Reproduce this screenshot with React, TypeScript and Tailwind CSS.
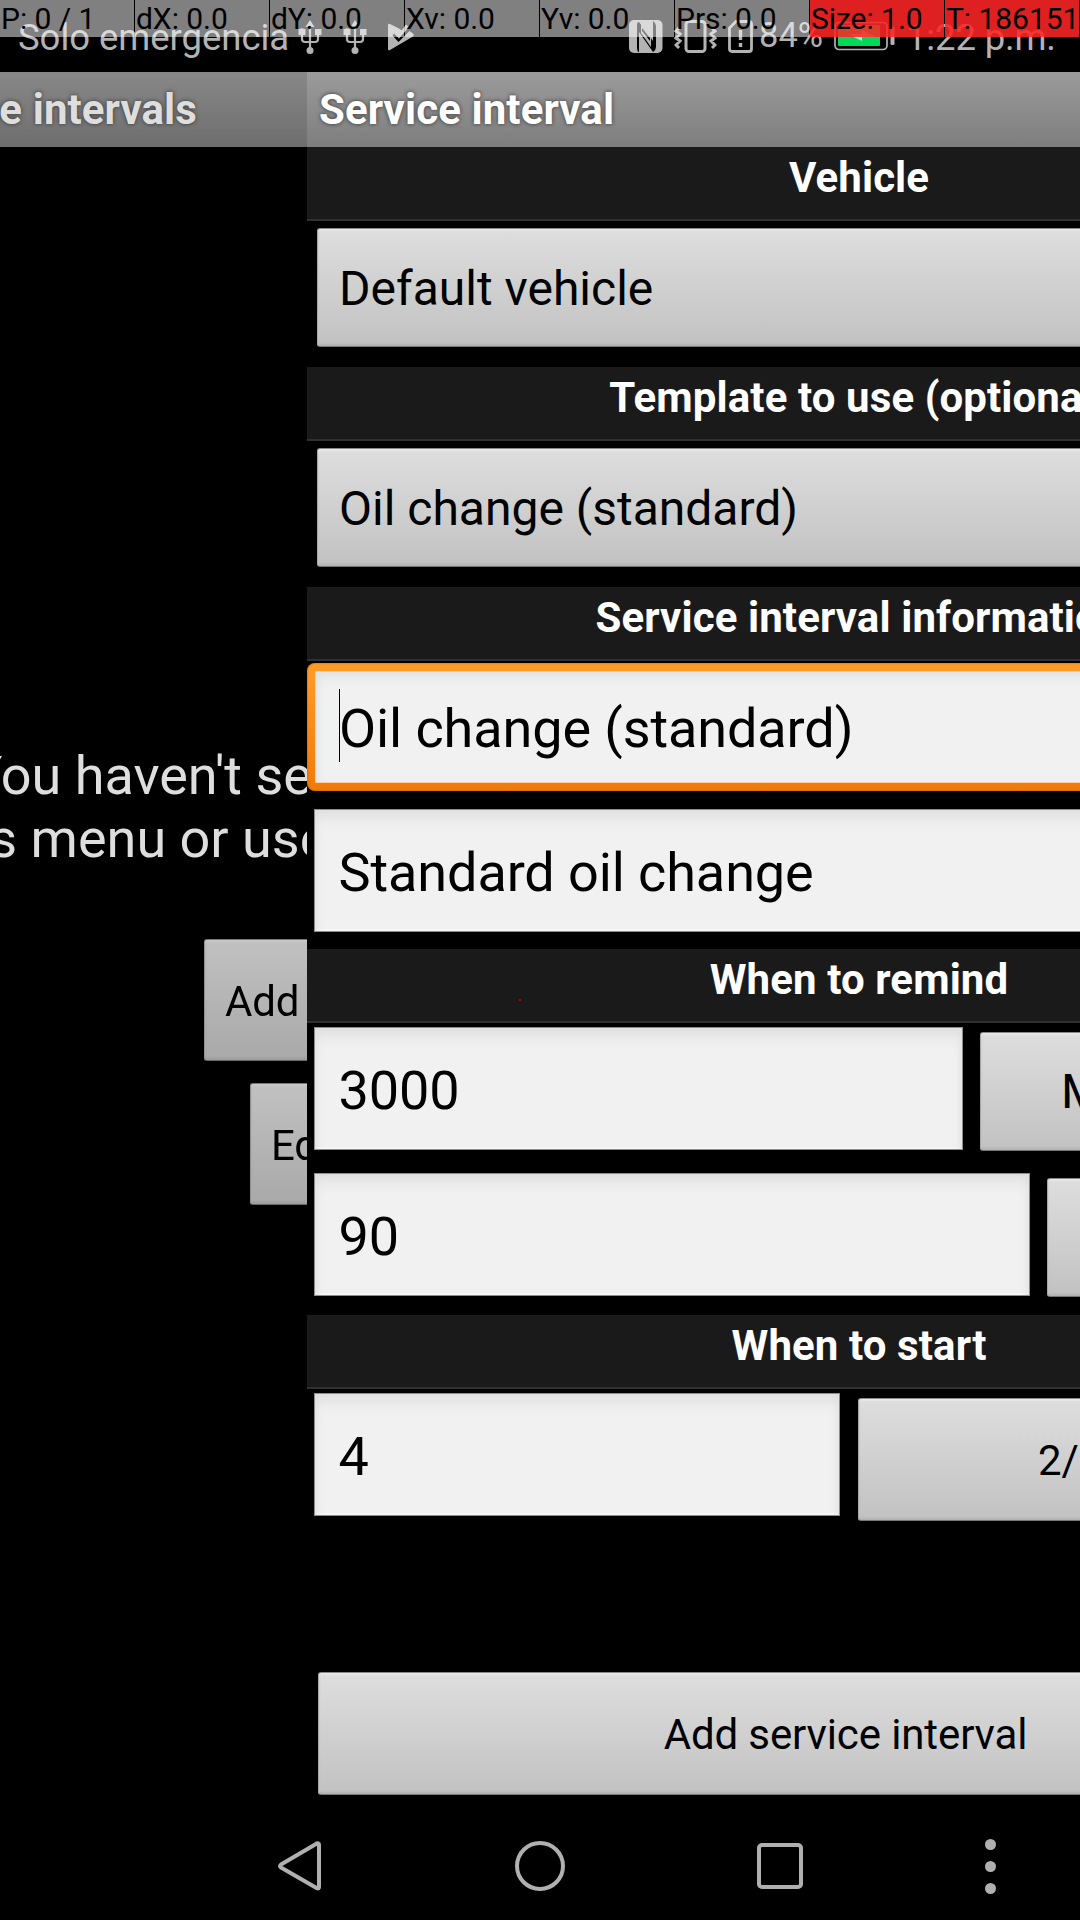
import type { ReactNode } from 'react';

function SectionHeader({ children }: { children: ReactNode }) {
  return (
    <h2 className="h-[74px] shrink-0 border-b-2 border-[#303030] bg-[#1a1a1a] pl-6 text-center text-[42px] leading-[62px] font-bold tracking-[0.1px] text-white">
      {children}
    </h2>
  );
}

const button =
  'shrink-0 rounded-[3px] border border-t-[#8a8a8a] border-r-[#a8a8a8] border-b-[#777] border-l-[#a8a8a8] bg-linear-to-b from-[#dedede] to-[#c2c2c2] tracking-[-0.120px] text-black shadow-[inset_0_2px_1px_#e6e6e6,inset_0_-2px_2px_#b4b4b4]';

const field =
  'h-[123px] shrink-0 border border-[#8d8d8d] bg-[#f1f1f1] pl-[23.500px] text-[54px] leading-[125px] tracking-[-0.1px] text-black shadow-[inset_0_14px_16px_-8px_#dcdcdc,inset_6px_0_10px_-6px_#dedede,inset_-6px_0_10px_-6px_#dedede,inset_0_-2px_1px_#fafafa]';

function Spinner({ children }: { children: ReactNode }) {
  return (
    <div className="ml-[10px] h-[119px] w-[1060px] shrink-0 rounded-[3px] border border-t-[#8a8a8a] border-r-[#a8a8a8] border-b-[#777] border-l-[#a8a8a8] bg-linear-to-b from-[#dedede] to-[#c2c2c2] pl-[21px] text-[48px] leading-[119px] text-black shadow-[inset_0_2px_1px_#e6e6e6,inset_0_-2px_2px_#b4b4b4]">
      {children}
    </div>
  );
}

function Usb() {
  return (
    <svg className="h-[34px] w-6" viewBox="0 0 24 34" fill="#b3b3b3">
      <path d="M12 0l4.500 7h-9z" />
      <circle cx="12" cy="30.500" r="3.500" />
      <circle cx="4" cy="11" r="2.800" />
      <rect x="17" y="9" width="6.500" height="6" />
      <path d="M0.500 9h7v6h-7z" />
      <path d="M4 12v7q0 3 3 3h10q3 0 3-3v-7M12 4v26" fill="none" stroke="#b3b3b3" strokeWidth="2.200" />
    </svg>
  );
}

function StatusBar() {
  return (
    <div className="flex h-[72px] shrink-0 items-start bg-black text-[#b3b3b3]">
      <span className="ml-[18px] w-[280px] text-[36.500px] leading-[75px] tracking-[-0.050px] whitespace-nowrap">Solo emergencia</span>
      <div className="mt-[19.500px] flex h-[34px] items-center">
        <Usb />
        <div className="w-[21px]" />
        <Usb />
        <svg className="ml-[21px] h-7 w-[26px]" viewBox="0 0 26 28" fill="#b3b3b3">
          <path d="M0 2Q0 0 2 1L11 5.500 14 7.500 10.500 13 7 9.500 4.500 12.500 10.500 19 21.500 8 25 10.500Q26.500 12 25 13.500L2 27Q0 28 0 26z" />
          <path d="M18 1.500L21 4 11 15.500 6 10.500 8 8 11 11z" />
        </svg>
      </div>
      <div className="mt-5 ml-[215px] flex h-[33px] items-center">
        <svg className="h-[33px] w-[34px]" viewBox="0 0 34 33">
          <rect width="33.500" height="33" rx="5" fill="#b3b3b3" />
          <path d="M10 2Q8 2 8 5v23q0 3 2 4.500V12l14 20q3-2 3-5V6q0-3-3-5v20z" fill="#000" />
          <path d="M12 4l10 13v10L12 13z" fill="#b3b3b3" />
          <path d="M13 8l8 10v3L13 11z" fill="#000" />
        </svg>
        <svg className="ml-[11px] h-[33px] w-[43px]" viewBox="0 0 43 33" fill="none" stroke="#b3b3b3">
          <rect x="12" y="1.500" width="19" height="30" rx="3" strokeWidth="3" />
          <path d="M5 8L2 11l4 3-4 4 4 3-4 4 3 3M38 8l3 3-4 3 4 4-4 3 4 4-3 3" strokeWidth="3" />
        </svg>
        <svg className="ml-[11px] h-[33px] w-[25px]" viewBox="0 0 25 33" fill="none" stroke="#b3b3b3">
          <path d="M8 1.500h13q2.500 0 2.500 2.500v25q0 2.500-2.500 2.500H4Q1.500 31.500 1.500 29V8z" strokeWidth="2.800" />
          <path d="M12.500 10v10M12.500 23v4" strokeWidth="3.400" />
        </svg>
      </div>
      <span className="ml-[6px] w-[75px] text-[34.500px] leading-[70px] whitespace-nowrap">84%</span>
      <svg className="mt-[21px] h-[30px] w-[61px]" viewBox="0 0 61 30">
        <rect x="1" y="1.500" width="52" height="27" rx="4" fill="none" stroke="#b3b3b3" strokeWidth="1.700" />
        <rect x="4" y="4" width="42" height="21" rx="1" fill="#00d95a" />
        <path d="M14 13l14 7v-4h14L28 9v4z" fill="#b3ecc7" />
        <rect x="56.500" y="6" width="4" height="18" rx="1.500" fill="#b3b3b3" />
      </svg>
      <span className="ml-[11px] text-[36.500px] leading-[75px] tracking-[-0.150px] whitespace-nowrap">1:22 p.m.</span>
    </div>
  );
}

const readings = ['P: 0 / 1', 'dX: 0.0', 'dY: 0.0', 'Xv: 0.0', 'Yv: 0.0', 'Prs: 0.0', 'Size: 1.0', 'T: 186151'];

function PointerReadout() {
  return (
    <div className="absolute inset-x-0 top-0 flex h-[37px] gap-px">
      {readings.map((text, i) => (
        <div key={text} className="w-[134px] shrink-0 bg-white/50">
          <div
            className={`h-[37px] pl-[1px] text-[30px] leading-[38px] tracking-[-0.050px] whitespace-nowrap text-black ${i > 5 ? 'bg-[#ff0000]/75' : ''}`}
          >
            {text}
          </div>
        </div>
      ))}
    </div>
  );
}

function PreviousScreen() {
  return (
    <section className="flex w-[307px] shrink-0 flex-col overflow-hidden bg-black">
      <div className="flex h-[75px] justify-end bg-linear-to-b from-[#888] to-[#6e6e6e] pr-[110px] text-[42px] leading-[75px] font-bold tracking-[0.1px] whitespace-nowrap text-[#dedede] [text-shadow:0_0_4px_#333]">
        Service intervals
      </div>
      <div className="mt-[597px] h-[195px] text-[54px] leading-[63px] whitespace-nowrap text-[#dedede]">
        <p className="-ml-[30px]">You haven't set</p>
        <p className="-ml-[18px]">'s menu or use</p>
      </div>
      <div className={`${button} ml-[204px] h-[122px] w-[500px] pl-5 text-[42px] leading-[123px] brightness-[.87]`}>Add service interval</div>
      <div className={`${button} mt-[22px] ml-[250px] h-[122px] w-[400px] pl-5 text-[42px] leading-[123px] brightness-[.87]`}>Edit templates</div>
    </section>
  );
}

function ServiceIntervalForm() {
  return (
    <section className="w-[773px] shrink-0 overflow-hidden bg-black">
      <div className="flex w-[1080px] flex-col">
        <h1 className="h-[75px] bg-linear-to-b from-[#9b9b9b] to-[#7e7e7e] pl-3 text-[42px] leading-[75px] font-bold tracking-[0.1px] text-white [text-shadow:0_0_4px_#333]">
          Service interval
        </h1>
        <SectionHeader>Vehicle</SectionHeader>
        <div className="pt-[7px] pb-5">
          <Spinner>Default vehicle</Spinner>
        </div>
        <SectionHeader>Template to use (optional)</SectionHeader>
        <div className="pt-[7px] pb-5">
          <Spinner>Oil change (standard)</Spinner>
        </div>
        <SectionHeader>Service interval information</SectionHeader>
        <div className="mt-[2px] h-[128px] rounded-[8px] bg-linear-to-b from-[#ff9c28] to-[#f27a05] p-2 shadow-[inset_0_0_2px_#a85500]">
          <div className="flex h-[112px] items-start border border-[#f8cfa0] bg-[#f1f1f1] pl-[23px] text-[54px] leading-[114px] tracking-[-0.1px] text-black shadow-[inset_0_10px_14px_-6px_#dde0e0,inset_6px_0_10px_-6px_#dedede]">
            <span className="mt-[17px] -mr-px h-[73px] w-px bg-black" />
            Oil change (standard)
          </div>
        </div>
        <div className={`${field} mx-[7px] mt-[18px] mb-[17px]`}>Standard oil change</div>
        <SectionHeader>When to remind</SectionHeader>
        <div className="mt-1 flex h-[146px] items-start pl-[7px]">
          <div className={`${field} w-[649px]`}>3000</div>
          <div className={`${button} mt-[5px] ml-[17px] h-[119px] w-[390px] pl-[80px] text-[48px] leading-[118px]`}>Miles</div>
        </div>
        <div className="flex h-[142px] items-start pl-[7px]">
          <div className={`${field} w-[716px]`}>90</div>
          <div className={`${button} mt-[5px] ml-[17px] h-[119px] w-[330px] pl-[80px] text-[48px] leading-[118px]`}>Days</div>
        </div>
        <SectionHeader>When to start</SectionHeader>
        <div className="mt-1 flex h-[279px] items-start pl-[7px]">
          <div className={`${field} w-[526px]`}>4</div>
          <div className={`${button} mt-[5px] ml-[18px] h-[123px] w-[512px] pl-[179px] text-[42px] leading-[123px]`}>2/10/17</div>
        </div>
        <div className={`${button} mx-[11px] h-[123px] pr-[3px] text-center text-[42px] leading-[123px]`}>Add service interval</div>
      </div>
    </section>
  );
}

function NavigationBar() {
  return (
    <nav className="flex h-[108px] shrink-0 items-center bg-black pl-[278px] text-[#b0b0b0]">
      <svg className="h-[50px] w-[43px]" viewBox="0 0 43 50" fill="none" stroke="currentColor" strokeWidth="4" strokeLinejoin="round">
        <path d="M39.700 2.300Q41 2.500 41 4v42q0 2-2 1.200L3 26.500Q1 25 3 23.500L38 3Q39 2 39.700 2.300z" />
      </svg>
      <div className="ml-[194px] size-[50px] rounded-full border-4 border-current" />
      <div className="ml-[192px] size-[46px] rounded-[5px] border-4 border-current" />
      <div className="ml-[182px] flex flex-col gap-[11px]">
        <i className="size-[11px] rounded-full bg-current" />
        <i className="size-[11px] rounded-full bg-current" />
        <i className="size-[11px] rounded-full bg-current" />
      </div>
    </nav>
  );
}

export default function App() {
  return (
    <div className="relative flex h-[1920px] w-[1080px] flex-col overflow-hidden bg-black font-['Roboto',sans-serif]">
      <StatusBar />
      <main className="flex h-[1740px] shrink-0 overflow-hidden">
        <PreviousScreen />
        <ServiceIntervalForm />
      </main>
      <NavigationBar />
      <PointerReadout />
      <div className="absolute top-[999px] left-[519px] size-[2px] bg-[#b00000]" />
    </div>
  );
}
